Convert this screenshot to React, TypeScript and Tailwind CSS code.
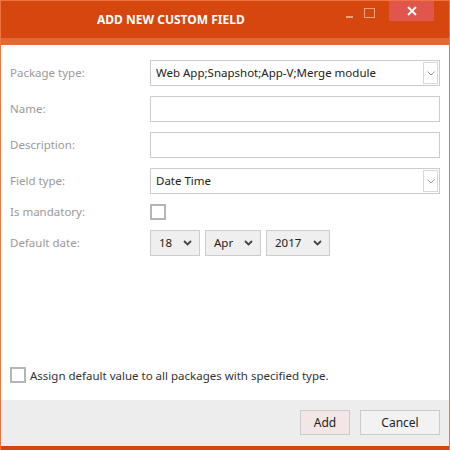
import React from "react";

const font = { fontFamily: '"Segoe UI", "Noto Sans", "Open Sans", sans-serif' };

function Chevron({ className = "" }: { className?: string }) {
  return (
    <svg width="9" height="6" viewBox="0 0 9 6" className={className}>
      <path d="M1 1 L4.5 4.5 L8 1" fill="none" stroke="currentColor" strokeWidth="1.8" />
    </svg>
  );
}

function SelectBox({ value }: { value: string }) {
  return (
    <div className="flex h-[26px] w-[290px] items-center border border-[#cccccc] bg-white pl-[5px] pr-[1px] text-[11.5px] text-[#222]">
      <span className="flex-1">{value}</span>
      <div className="flex h-[22px] w-[15px] items-center justify-center border border-[#d8d8d8] text-[#9a9a9a]">
        <svg width="8" height="5" viewBox="0 0 8 5">
          <path d="M0.5 0.5 L4 4 L7.5 0.5" fill="none" stroke="currentColor" strokeWidth="1" />
        </svg>
      </div>
    </div>
  );
}

function TextBox() {
  return <div className="h-[26px] w-[290px] border border-[#cccccc] bg-white" />;
}

function DateSel({ value, w }: { value: string; w: string }) {
  return (
    <div className={`flex h-[26px] ${w} items-center justify-between border border-[#cccccc] bg-[#efefef] pl-[8px] pr-[7px] text-[11.5px] text-[#222]`}>
      <span>{value}</span>
      <Chevron className="text-[#444]" />
    </div>
  );
}

function Row({ label, children }: { label: string; children: React.ReactNode }) {
  return (
    <div className="flex items-center">
      <div className="w-[149px] pl-[9px] text-[11.5px] leading-[16px] text-[#9a9a9a]">{label}</div>
      {children}
    </div>
  );
}

export default function App() {
  return (
    <div className="flex h-[450px] w-[450px] flex-col border-x border-t border-[#f0743f] bg-white" style={font}>
      <div className="relative flex h-[37px] shrink-0 items-center bg-[#d5470f]">
        <div className="w-full pl-[96px] text-[12px] font-bold text-white">ADD NEW CUSTOM FIELD</div>
        <div className="absolute left-[345px] top-[15px] h-[2px] w-[7px] bg-[#f0a080]" />
        <div className="absolute left-[363px] top-[7px] h-[10px] w-[11px] border border-[#f0a080]" />
        <div className="absolute left-[388px] top-0 flex h-[20px] w-[45px] items-center justify-center bg-[#e0554c]">
          <svg width="10" height="10" viewBox="0 0 10 10">
            <path d="M1 1 L9 9 M9 1 L1 9" stroke="white" strokeWidth="1.8" />
          </svg>
        </div>
      </div>
      <div className="h-[7px] shrink-0 bg-[#e2673a]" />
      <div className="flex flex-1 flex-col">
        <div className="flex flex-col gap-[10px] pt-[15px]">
          <Row label="Package type:">
            <SelectBox value="Web App;Snapshot;App-V;Merge module" />
          </Row>
          <Row label="Name:">
            <TextBox />
          </Row>
          <Row label="Description:">
            <TextBox />
          </Row>
          <Row label="Field type:">
            <SelectBox value="Date Time" />
          </Row>
          <Row label="Is mandatory:">
            <div className="h-[16px] w-[16px] border-2 border-[#b5b5b5] bg-white" />
          </Row>
          <Row label="Default date:">
            <div className="flex gap-[5px]">
              <DateSel value="18" w="w-[50px]" />
              <DateSel value="Apr" w="w-[56px]" />
              <DateSel value="2017" w="w-[64px]" />
            </div>
          </Row>
        </div>
        <div className="flex-1" />
        <div className="flex items-center gap-[4px] pb-[16px] pl-[9px]">
          <div className="h-[16px] w-[16px] border-2 border-[#b5b5b5] bg-white" />
          <span className="text-[11.5px] text-[#333]">Assign default value to all packages with specified type.</span>
        </div>
      </div>
      <div className="flex h-[46px] shrink-0 items-start justify-end gap-[10px] bg-[#ededed] pr-[9px] pt-[10px]">
        <div className="flex h-[25px] w-[50px] items-center justify-center border border-[#cccccc] bg-[#f3e7e5] text-[12px] text-[#222]">Add</div>
        <div className="flex h-[25px] w-[80px] items-center justify-center border border-[#cccccc] bg-[#f2f2f2] text-[12px] text-[#222]">Cancel</div>
      </div>
      <div className="h-[4px] shrink-0 bg-[#d5470f]" />
    </div>
  );
}
